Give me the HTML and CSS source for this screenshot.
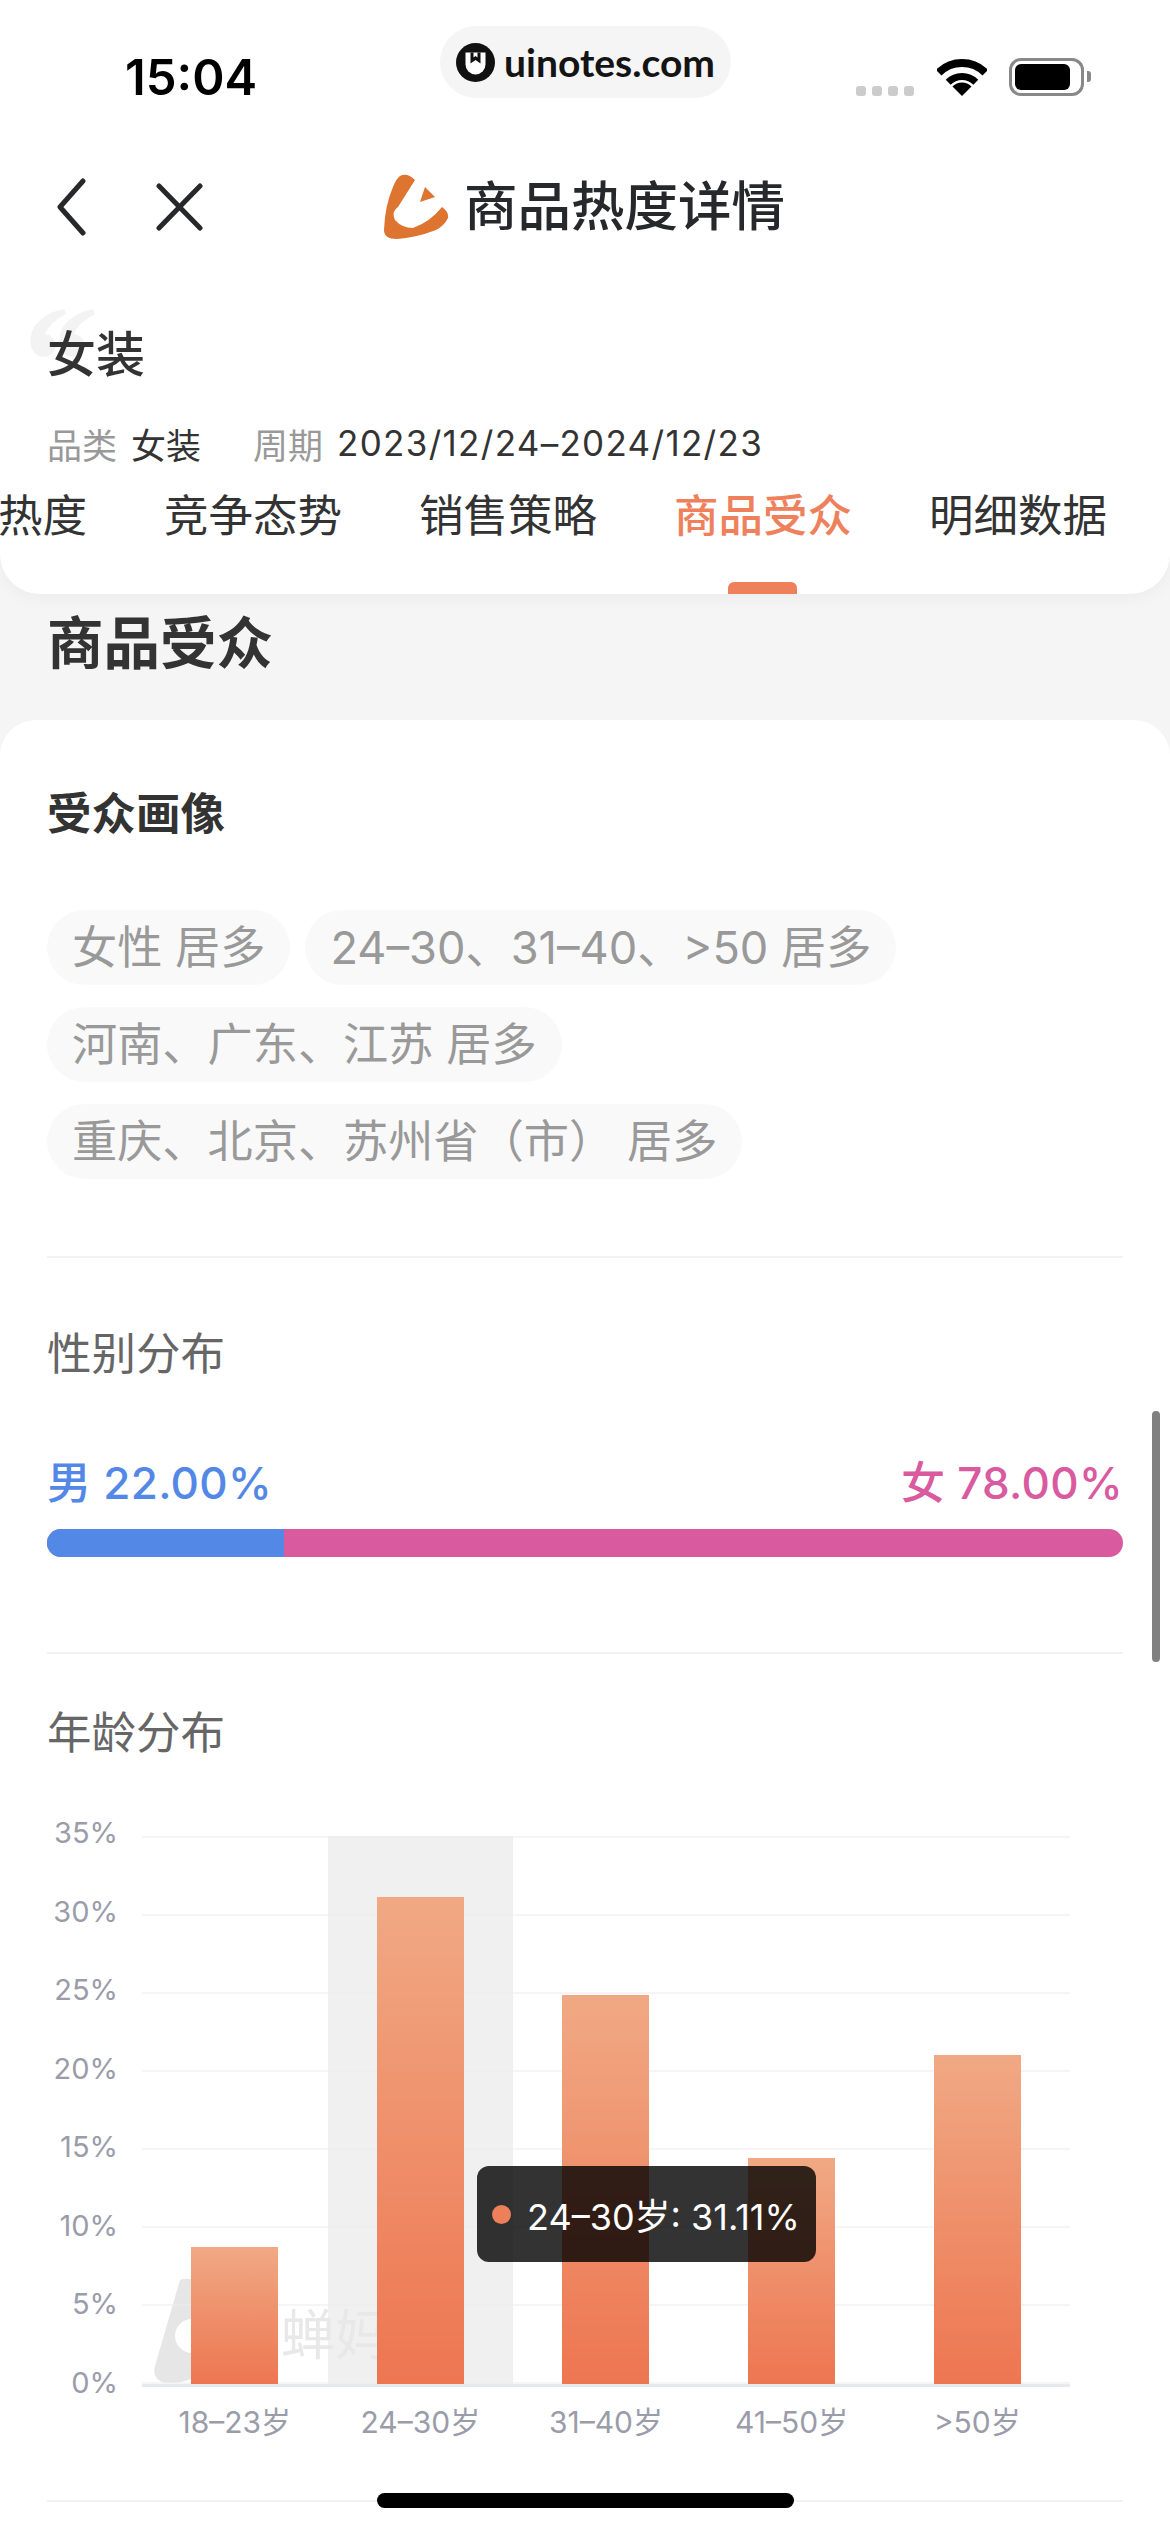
FILE: index.html
```html
<!DOCTYPE html>
<html lang="zh-CN">
<head>
    <meta charset="UTF-8">
    <meta name="viewport" content="width=device-width, initial-scale=1.0">
    <title>商品热度详情</title>
    <link rel="stylesheet" href="styles.css">
</head>
<body>
    <div class="top">
        <div class="status-bar">
            <div class="time">15:04</div>
            <div class="site-pill">
                <svg class="site-logo" viewBox="0 0 39 39">
                    <circle cx="19.5" cy="19.5" r="19.5" fill="#111"/>
                    <path d="M9.5 9.5h20v12a10 10 0 0 1-20 0z" fill="#fff"/>
                    <path d="M14.5 9.5v11l5-3.500 5 3.500v-11h-3v5l-2-1.500-2 1.500v-5z" fill="#111"/>
                </svg>
                <span>uinotes.com</span>
            </div>
            <div class="status-icons">
                <div class="signal"><i></i><i></i><i></i><i></i></div>
                <svg class="wifi" viewBox="0 0 50 37">
                    <path d="M1.700 13.700A33 33 0 0 1 48.300 13.700" fill="none" stroke="#000" stroke-width="8"/>
                    <path d="M11.200 23.200A19.500 19.500 0 0 1 38.800 23.200" fill="none" stroke="#000" stroke-width="7"/>
                    <path d="M25 37L15.500 27.500A13.400 13.400 0 0 1 34.500 27.500Z" fill="#000"/>
                </svg>
                <div class="battery"><div class="battery-level"></div></div>
                <div class="battery-tip"></div>
            </div>
        </div>

        <div class="nav">
            <svg class="nav-back" viewBox="0 0 30 58">
                <path d="M27 3L4 29L27 55" fill="none" stroke="#26282c" stroke-width="5" stroke-linecap="round" stroke-linejoin="round"/>
            </svg>
            <svg class="nav-close" viewBox="0 0 47 48">
                <path d="M3 3L44 45M44 3L3 45" fill="none" stroke="#26282c" stroke-width="5" stroke-linecap="round"/>
            </svg>
            <svg class="nav-logo" viewBox="22 23 68 68">
                <path d="M40 26Q47 22 55 30L38 57Q31 62 35 70Q42 78 53 78Q70 72 82 57Q89 62 88 68Q84 76 76 80Q55 88 37 89Q24 89 24 80Q25 55 33 37Q36 29 40 26Z" fill="#dd7430"/>
                <path d="M65 37L75 47L60 52Z" fill="#dd7430"/>
            </svg>
            <div class="nav-title">商品热度详情</div>
        </div>

        <div class="product">
            <svg class="quote" viewBox="0 0 65 48">
                <path d="M34 0Q14 4 4 18Q-3 32 3 42Q9 50 18 47Q27 43 25 33Q23 26 15 25Q19 14 36 5Z" fill="#f3f3f3"/>
                <path d="M63 0Q43 4 33 18Q26 32 32 42Q38 50 47 47Q56 43 54 33Q52 26 44 25Q48 14 65 5Z" fill="#f3f3f3"/>
            </svg>
            <div class="product-name">女装</div>
            <div class="product-meta">
                <span class="meta-key">品类</span>
                <span class="meta-val">女装</span>
                <span class="meta-key meta-gap">周期</span>
                <span class="meta-val meta-date">2023/12/24–2024/12/23</span>
            </div>
        </div>

        <div class="tabs">
            <div class="tab">热度</div>
            <div class="tab">竞争态势</div>
            <div class="tab">销售策略</div>
            <div class="tab active">商品受众</div>
            <div class="tab">明细数据</div>
        </div>
    </div>

    <h2 class="section-title">商品受众</h2>

    <div class="card">
        <div class="block block-tags">
            <h3 class="block-title">受众画像</h3>
            <div class="tags">
                <span class="tag">女性 居多</span>
                <span class="tag">24–30、31–40、&gt;50 居多</span>
                <span class="tag">河南、广东、江苏 居多</span>
                <span class="tag">重庆、北京、苏州省（市） 居多</span>
            </div>
        </div>

        <div class="block block-gender">
            <div class="block-label">性别分布</div>
            <div class="gender-row">
                <span class="male">男 22.00%</span>
                <span class="female">女 78.00%</span>
            </div>
            <div class="gender-bar">
                <div class="gender-male" style="width: 22%"></div>
            </div>
        </div>

        <div class="block block-age">
            <div class="block-label">年龄分布</div>
            <div class="chart">
                <div class="y-axis">
                    <span>35%</span>
                    <span>30%</span>
                    <span>25%</span>
                    <span>20%</span>
                    <span>15%</span>
                    <span>10%</span>
                    <span>5%</span>
                    <span>0%</span>
                </div>
                <div class="plot">
                    <div class="col-hover"></div>
                    <div class="watermark">
                        <svg class="watermark-logo" viewBox="0 0 62 106">
                            <path d="M26 2Q38 -2 50 8L60 60L50 94Q30 108 8 104Q-2 100 1 88Z" fill="#e6e6e6"/>
                            <circle cx="38" cy="58" r="17" fill="#fff"/>
                        </svg>
                        <span>蝉妈妈</span>
                    </div>
                    <div class="grid-lines"><i></i><i></i><i></i><i></i><i></i><i></i><i></i><i></i></div>
                    <div class="bars">
                        <div class="col"><div class="bar" style="height: 24.95%"></div></div>
                        <div class="col"><div class="bar" style="height: 88.89%"></div></div>
                        <div class="col"><div class="bar" style="height: 70.9%"></div></div>
                        <div class="col"><div class="bar" style="height: 41.2%"></div></div>
                        <div class="col"><div class="bar" style="height: 60%"></div></div>
                    </div>
                    <div class="tooltip">
                        <i class="tooltip-dot"></i>
                        <span>24–30岁: 31.11%</span>
                    </div>
                </div>
                <div class="x-axis">
                    <span>18–23岁</span>
                    <span>24–30岁</span>
                    <span>31–40岁</span>
                    <span>41–50岁</span>
                    <span>&gt;50岁</span>
                </div>
            </div>
        </div>
    </div>

    <div class="scrollbar"></div>
    <div class="home-bar"></div>
</body>
</html>
```

FILE: styles.css
```css
* {
    margin: 0;
    padding: 0;
    box-sizing: border-box;
}

body {
    position: relative;
    width: 1170px;
    height: 2532px;
    overflow: hidden;
    font-family: Inter, "Noto Sans CJK SC", sans-serif;
    background: #f5f5f6;
    color: #333;
}

i {
    display: block;
}

.top {
    position: relative;
    height: 594px;
    background: #fff;
    border-radius: 0 0 40px 40px;
    box-shadow: 0 4px 18px rgba(0,0,0,0.04);
}

/* status bar */
.status-bar {
    display: flex;
    align-items: center;
    height: 154px;
    padding: 0 79px 0 125px;
}

.time {
    width: 133px;
    font-size: 49px;
    font-weight: 600;
    color: #000;
    white-space: nowrap;
}

.site-pill {
    display: flex;
    align-items: center;
    align-self: flex-start;
    width: 291px;
    height: 72px;
    margin: 26px 0 0 182px;
    padding-left: 16px;
    background: #f5f5f5;
    border-radius: 36px;
    font-family: Lato, sans-serif;
    font-size: 39px;
    font-weight: 700;
    color: #141414;
}

.site-logo {
    width: 39px;
    height: 39px;
    margin-right: 9px;
}

.status-icons {
    display: flex;
    align-items: flex-end;
    height: 38px;
    margin-left: auto;
}

.signal {
    display: flex;
    gap: 6px;
}

.signal i {
    width: 10px;
    height: 10px;
    background: #ccc;
    border-radius: 3px;
}

.wifi {
    width: 50px;
    height: 37px;
    margin-left: 23px;
}

.battery {
    width: 75px;
    height: 38px;
    margin-left: 22px;
    padding: 3px;
    border: 3px solid #888;
    border-radius: 12px;
}

.battery-level {
    width: 55px;
    height: 100%;
    background: #000;
    border-radius: 6px;
}

.battery-tip {
    width: 4px;
    height: 11px;
    margin: 0 0 14px 3px;
    background: #888;
    border-radius: 0 3px 3px 0;
}

/* nav */
.nav {
    display: flex;
    align-items: center;
    height: 106px;
    padding-left: 56px;
}

.nav-back {
    width: 30px;
    height: 58px;
}

.nav-close {
    width: 47px;
    height: 48px;
    margin-left: 70px;
}

.nav-logo {
    width: 68px;
    height: 68px;
    margin-left: 179px;
}

.nav-title {
    margin-left: 14px;
    font-size: 53.500px;
    font-weight: 500;
    line-height: 60px;
    color: #26282c;
}

/* product */
.product {
    position: relative;
    padding: 65px 0 0 47px;
}

.quote {
    position: absolute;
    left: 30px;
    top: 49px;
    width: 65px;
    height: 48px;
}

.product-name {
    position: relative;
    font-size: 49px;
    font-weight: 500;
    line-height: 60px;
}

.product-meta {
    display: flex;
    align-items: center;
    height: 50px;
    margin-top: 33px;
    font-size: 35px;
    white-space: nowrap;
}

.meta-key {
    color: #999;
    margin-right: 14px;
}

.meta-val {
    color: #333;
}

.meta-gap {
    margin-left: 52px;
}

.meta-date {
    letter-spacing: 1.300px;
}

/* tabs */
.tabs {
    display: flex;
    gap: 77px;
    height: 126px;
    padding-top: 18px;
    margin-left: -2px;
    overflow: hidden;
}

.tab {
    position: relative;
    font-size: 44.500px;
    line-height: 60px;
    color: #333;
    white-space: nowrap;
}

.tab.active {
    color: #ee815c;
    font-weight: 500;
}

.tab.active::after {
    content: '';
    position: absolute;
    left: 54px;
    bottom: 0;
    width: 69px;
    height: 12px;
    background: #ee815c;
    border-radius: 6px 6px 0 0;
}

.section-title {
    height: 126px;
    padding: 20px 0 0 47px;
    font-size: 56.500px;
    font-weight: 700;
    line-height: 60px;
}

/* card */
.card {
    height: 1900px;
    padding: 0 47px;
    background: #fff;
    border-radius: 36px 36px 0 0;
}

.block {
    border-bottom: 2px solid #f2f2f2;
}

.block-tags {
    height: 538px;
    padding-top: 64px;
}

.block-gender {
    height: 396px;
    padding-top: 66px;
}

.block-age {
    height: 848px;
    padding-top: 49px;
}

.block-title {
    font-size: 44.500px;
    font-weight: 700;
    line-height: 60px;
}

.block-label {
    font-size: 44.500px;
    line-height: 60px;
    color: #666;
}

.tags {
    display: flex;
    flex-wrap: wrap;
    gap: 22px 15px;
    margin-top: 66px;
}

.tag {
    height: 75px;
    padding: 0 25px;
    background: #f9f9f9;
    border-radius: 37.500px;
    font-size: 45.200px;
    line-height: 75px;
    color: #999;
    white-space: nowrap;
}

.gender-row {
    display: flex;
    justify-content: space-between;
    height: 60px;
    margin-top: 69px;
    font-size: 44px;
    font-weight: 500;
    line-height: 60px;
    letter-spacing: 0.300px;
}

.male {
    color: #5388e6;
}

.female {
    color: #d95a9f;
}

.gender-bar {
    height: 28px;
    margin-top: 16px;
    background: #d95a9f;
    border-radius: 14px;
    overflow: hidden;
}

.gender-male {
    height: 100%;
    background: #5388e6;
}

/* age chart */
.chart {
    display: grid;
    grid-template-columns: 71px 928px;
    column-gap: 24px;
    margin-top: 73px;
}

.y-axis {
    display: flex;
    flex-direction: column;
    justify-content: space-between;
    align-items: flex-end;
    height: 552px;
    margin-top: -4px;
}

.y-axis span {
    height: 2px;
    font-size: 29px;
    line-height: 2px;
    color: #9a9caa;
    white-space: nowrap;
}

.plot {
    position: relative;
    height: 551px;
    border-bottom: 3px solid #e8e9ed;
}

.col-hover {
    position: absolute;
    left: 185.600px;
    top: 0;
    bottom: 0;
    width: 185.600px;
    background: #f0f0f0;
}

.grid-lines {
    position: absolute;
    inset: 0;
    display: flex;
    flex-direction: column;
    justify-content: space-between;
}

.grid-lines i {
    height: 2px;
    background: rgba(235,237,240,0.55);
}

.watermark {
    position: absolute;
    left: 12px;
    bottom: 0;
    display: flex;
    align-items: center;
    font-size: 54px;
    color: #e8e8e8;
    white-space: nowrap;
}

.watermark-logo {
    width: 62px;
    height: 106px;
    margin-right: 65px;
}

.bars {
    position: absolute;
    inset: 0;
    display: grid;
    grid-template-columns: repeat(5, 1fr);
}

.col {
    display: flex;
    align-items: flex-end;
    justify-content: center;
}

.bar {
    width: 87px;
    background: linear-gradient(180deg, #f0a984, #ed7651);
}

.tooltip {
    position: absolute;
    left: 335px;
    top: 330px;
    display: flex;
    align-items: center;
    gap: 16px;
    width: 339px;
    height: 96px;
    padding-left: 15px;
    background: rgba(0,0,0,0.8);
    border-radius: 12px;
    font-size: 36px;
    color: #fff;
    white-space: nowrap;
}

.tooltip-dot {
    width: 19px;
    height: 19px;
    background: #ee7f5b;
    border-radius: 50%;
}

.x-axis {
    grid-column: 2;
    display: grid;
    grid-template-columns: repeat(5, 1fr);
    margin-top: 15px;
    font-size: 30px;
    line-height: 40px;
    text-align: center;
    color: #9a9caa;
}

.scrollbar {
    position: absolute;
    left: 1152px;
    top: 1411px;
    width: 8px;
    height: 251px;
    background: #808080;
    border-radius: 4px;
}

.home-bar {
    position: absolute;
    left: 377px;
    top: 2493px;
    width: 417px;
    height: 15px;
    background: #000;
    border-radius: 8px;
}
```
